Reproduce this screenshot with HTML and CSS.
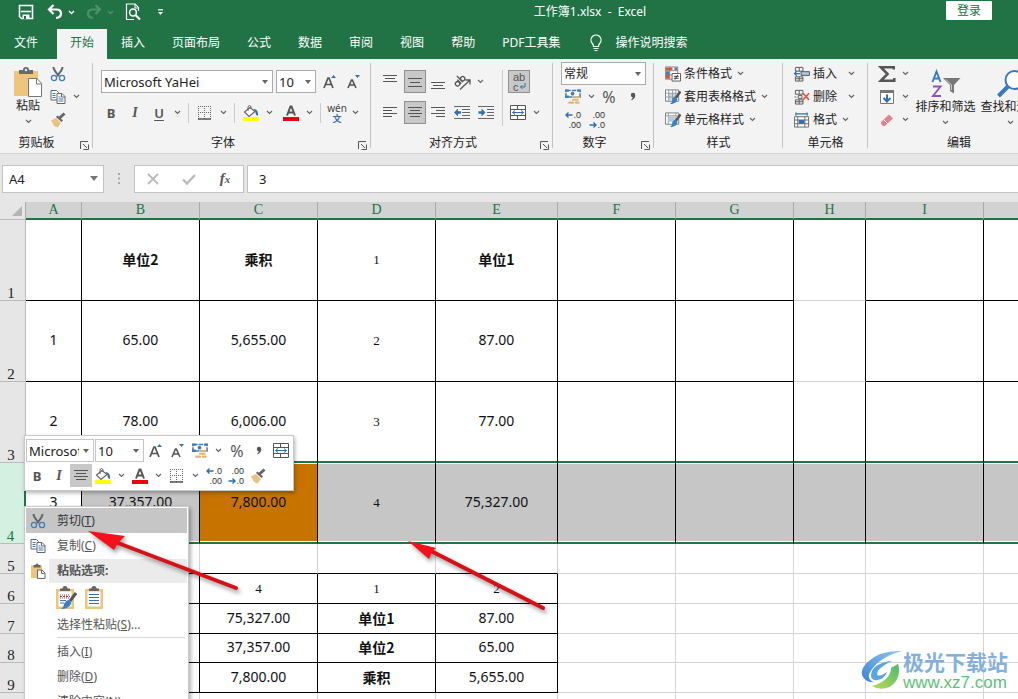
FILE: index.html
```html
<!DOCTYPE html>
<html lang="zh-CN">
<head>
<meta charset="utf-8">
<title>工作簿1.xlsx - Excel</title>
<link rel="stylesheet" href="styles.css">
</head>
<body>
<svg class="sprite" aria-hidden="true">
  <symbol id="chev" viewBox="0 0 7 5"><path d="M1 1l2.500 2.500L6 1" fill="none" stroke="#666" stroke-width="1.2"/></symbol>
  <symbol id="launch" viewBox="0 0 9 9"><path d="M.5 8V.5H8M3 3l4 4M8.500 3.500v5h-5" fill="none" stroke="#555"/></symbol>
  <symbol id="cut" viewBox="0 0 16 16"><path d="M3.500 1c0 3 2 5 5.500 9M12.500 1c0 3-2 5-5.500 9" fill="none" stroke="#666" stroke-width="2"/><circle cx="4" cy="12" r="2.600" fill="none" stroke="#3f7dbd" stroke-width="1.300"/><circle cx="12" cy="12" r="2.600" fill="none" stroke="#3f7dbd" stroke-width="1.300"/></symbol>
  <symbol id="copy" viewBox="0 0 16 16"><path d="M1 1.500h5.500l2 2V11H1z" fill="#fff" stroke="#666"/><path d="M2.500 4.500h3M2.500 6.500h3M2.500 8.500h3" stroke="#3f7dbd"/><path d="M7 4.500h5l3 3V14.500H7z" fill="#fff" stroke="#666"/><path d="M11.500 4.500V8H15" fill="none" stroke="#666"/><path d="M8.500 8h2M8.500 10h5M8.500 12h5" stroke="#3f7dbd"/></symbol>
  <symbol id="brush" viewBox="0 0 16 16"><path d="M1 8.500l5-2.500 5 5-3.500 4.500L4 14z" fill="#eac282"/><path d="M6 5l1.500-1.500 5.500 5L11.500 10z" fill="#666"/><path d="M9.500 6L14.500 1.500" stroke="#666" stroke-width="3"/></symbol>
  <symbol id="paste" viewBox="0 0 28 31"><path d="M0 4h24v25H0z" fill="#eec57c"/><path d="M5 3h4a3 3 0 0 1 6 0h4v4H5z" fill="#6a6a6a"/><circle cx="12" cy="3" r="1.200" fill="#eee"/><path d="M14.500 11.500h8.500l4.500 5V29.500h-13z" fill="#fff" stroke="#777"/><path d="M22.500 11.500v5.500h5" fill="none" stroke="#777"/></symbol>
  <symbol id="paste-s" viewBox="0 0 16 16"><path d="M1 2.500h11V15H1z" fill="#eec57c"/><path d="M3.500 2h2a1.500 1.500 0 0 1 3 0h2v2.500h-7z" fill="#666"/><path d="M7.500 7h4.500l3 3v5.500H7.500z" fill="#fff" stroke="#666"/><path d="M11.500 7v3.500h3" fill="none" stroke="#666"/></symbol>
  <symbol id="grow" viewBox="0 0 14 16"><path d="M1 14L5 4h1l4 10M2.500 10.500h6" fill="none" stroke="#555" stroke-width="1.700"/><path d="M8 4l2.500-3L13 4z" fill="#3f6da5"/></symbol>
  <symbol id="shrink" viewBox="0 0 14 16"><path d="M1 14L4.500 6h.800L9 14M2.500 11h5" fill="none" stroke="#555" stroke-width="1.600"/><path d="M8 1h5l-2.500 3z" fill="#3f6da5"/></symbol>
  <symbol id="border" viewBox="0 0 14 14"><path d="M.5 0v13M6.500 0v13M12.500 0v13M0 .5h13M0 6.500h13" stroke="#666" stroke-dasharray="1 1"/><path d="M0 13h13" stroke="#444" stroke-width="1.400"/></symbol>
  <symbol id="bucket" viewBox="0 0 18 16"><path d="M8 2.500L2.500 7l4.500 4.500L13 6.500z" fill="#fff" stroke="#666" stroke-width="1.200"/><path d="M6 6V1.500q1.500-2 3 0V4" fill="none" stroke="#666"/><path d="M11.500 4q5 0 4.500 7-3-1-2.500-4z" fill="#3f6da5"/><path d="M1 12h16v4H1z" fill="#ff0"/></symbol>
  <symbol id="fcolor" viewBox="0 0 16 16"><path d="M4 10.500L7.500 1.500h1L12 10.500M5.500 7.500h5" fill="none" stroke="#555" stroke-width="2"/><path d="M0 12h16v4H0z" fill="#e60012"/></symbol>
  <symbol id="a-top" viewBox="0 0 16 16"><path d="M1 1.500h14M3 4.500h10M1 7.500h14" stroke="#555"/></symbol>
  <symbol id="a-mid" viewBox="0 0 16 16"><path d="M1 4.500h14M3 8.500h10M1 12.500h14" stroke="#555"/></symbol>
  <symbol id="a-bot" viewBox="0 0 16 16"><path d="M1 8.500h14M3 11.500h10M1 14.500h14" stroke="#555"/></symbol>
  <symbol id="a-left" viewBox="0 0 16 16"><path d="M1 2.500h14M1 5.500h9M1 8.500h14M1 11.500h9" stroke="#555"/></symbol>
  <symbol id="a-cen" viewBox="0 0 16 16"><path d="M1 2.500h14M3 5.500h10M1 8.500h14M3 11.500h10" stroke="#555"/></symbol>
  <symbol id="a-right" viewBox="0 0 16 16"><path d="M1 2.500h14M6 5.500h9M1 8.500h14M6 11.500h9" stroke="#555"/></symbol>
  <symbol id="outdent" viewBox="0 0 18 16"><path d="M1 1.500h16M9 4.500h8M9 7.500h8M9 10.500h8M1 13.500h16" stroke="#666"/><path d="M1 7.500l4-4v2.800h3v2.400H5v2.800z" fill="#2f6fb3"/></symbol>
  <symbol id="indent" viewBox="0 0 18 16"><path d="M1 1.500h16M10 4.500h7M10 7.500h7M10 10.500h7M1 13.500h16" stroke="#666"/><path d="M8.500 7.500l-4-4v2.800h-3v2.400h3v2.800z" fill="#2f6fb3"/></symbol>
  <symbol id="orient" viewBox="0 0 18 18"><g fill="none" stroke="#555" stroke-width="1.300"><g transform="rotate(-45 6 8)"><circle cx="3" cy="9" r="2.200"/><path d="M5.700 6v5.500M8 3v8.500"/><circle cx="10.200" cy="9" r="2.200"/></g><path d="M7 16.500L16.500 7.500M12.500 7h4.500v4.500"/></g></symbol>
  <symbol id="merge" viewBox="0 0 16 16"><path d="M.5.500h15v14H.5zM.5 4.500h15M.5 10.500h15M7.500.5v4M7.500 10.500v4" fill="#fff" stroke="#555"/><path d="M2.500 7.500h11M5 5.500l-2.500 2 2.500 2M11 5.500l2.500 2-2.500 2" fill="none" stroke="#2f6fb3"/></symbol>
  <symbol id="money" viewBox="0 0 17 16"><path d="M1 1h15v7H1z" fill="#fff" stroke="#3f7dbd" stroke-width="1.600" stroke-dasharray="5 1"/><path d="M0 0h4v2.500H0zM13 0h4v2.500h-4zM0 6.500h4V9H0z" fill="#3f7dbd"/><circle cx="8" cy="4.500" r="2" fill="#3f7dbd"/><path d="M9.500 8h5M8.500 11h5M4.500 14h4M11.500 14h3" stroke="#e3b470" stroke-width="2.200" stroke-linecap="round"/></symbol>
  <symbol id="comma" viewBox="0 0 8 16"><circle cx="4" cy="6" r="2.200" fill="#555"/><path d="M6 6q.3 3.500-3.500 5 2-2 1.500-4z" fill="#555" stroke="#555" stroke-width=".6"/></symbol>
  <symbol id="cond" viewBox="0 0 17 16"><path d="M.5.500h13v13H.5zM.5 4.500h13M.5 9h13M5 .5v13" fill="#fff" stroke="#888"/><path d="M1 1h7v3H1zM1 9h4v4H1z" fill="#d5573b"/><path d="M1 5h4v4H1zM10 1h3v3h-3z" fill="#4d7eb3"/><path d="M7.500 7.500h9v8h-9z" fill="#fff" stroke="#555"/><path d="M9.500 10.500h5M9.500 12.500h5M13.500 9l-3 5" stroke="#333"/></symbol>
  <symbol id="tstyle" viewBox="0 0 17 16"><path d="M.5.500h14v12H.5z" fill="#fff" stroke="#777"/><path d="M3 4h9v8H3z" fill="#c9d7e6"/><path d="M.5 4h14M.5 8h14M4 .5v12M8 .5v12M11.500.5v12" fill="none" stroke="#999"/><path d="M16.500 2L11 9.500" stroke="#555" stroke-width="2.600"/><path d="M10.500 8q4 1 2 4.500-2 3-7.500 3 3-1.500 2.500-4 .5-3 3-3.500z" fill="#3b80c4"/></symbol>
  <symbol id="cstyle" viewBox="0 0 17 16"><path d="M.5.500h14v12H.5z" fill="#fff" stroke="#777"/><path d="M.5 3.500h14M3.500.5v12M11.500.5v12" stroke="#999"/><path d="M4 4h7.500v6H4z" fill="#b4cae1"/><path d="M16.500 2L11 9.500" stroke="#555" stroke-width="2.600"/><path d="M10.500 8q4 1 2 4.500-2 3-7.500 3 3-1.500 2.500-4 .5-3 3-3.500z" fill="#3b80c4"/></symbol>
  <symbol id="ins" viewBox="0 0 17 16"><path d="M1.500 1h8v4h-8zM5.500 1v4M1.500 11h8v4.500h-8zM5.500 11v4.500M1.500 13h8" fill="none" stroke="#555"/><path d="M7.500 5.500h9v4h-9z" fill="#a9c5e2" stroke="#555"/><path d="M6.500 7.500h-6M3 5L.5 7.500 3 10" fill="none" stroke="#2f6fb3" stroke-width="1.300"/></symbol>
  <symbol id="del" viewBox="0 0 17 16"><path d="M1.500 1h8v4h-8zM5.500 1v4M1.500 11h8v4.500h-8zM5.500 11v4.500M1.500 13h8M.5 8h2M4.500 6.500h4v3h-4z" fill="none" stroke="#555"/><path d="M9.500 4l6.500 7M16 4l-6.500 7" stroke="#e0593a" stroke-width="1.800"/></symbol>
  <symbol id="fmt" viewBox="0 0 17 16"><path d="M.5 4.500h15v11H.5zM.5 8h15M.5 12h15M4 4.500v11M11.500 4.500v11" fill="#fff" stroke="#666"/><path d="M5 8h6v4H5z" fill="#2f6fb3"/><path d="M2 1.500h12M2 0v3.500M14 0v3.500" stroke="#2f6fb3" stroke-width="1.200"/></symbol>
  <symbol id="sigma" viewBox="0 0 16 16"><path d="M14 4V2H2.500L8.500 8l-6 6H14.500v-2.500" fill="none" stroke="#555" stroke-width="2.200"/></symbol>
  <symbol id="fill" viewBox="0 0 16 16"><path d="M1.500 1.500h13v13h-13z" fill="#fff" stroke="#777"/><path d="M1 1h14v3H1z" fill="#777"/><path d="M8 5.500v7M4.500 9L8 12.500 11.500 9" fill="none" stroke="#2f6fb3" stroke-width="2"/></symbol>
  <symbol id="erase" viewBox="0 0 16 16"><path d="M2 10L10 2.500 14 6.500 6 14H4L2 12z" fill="#e8808f"/><path d="M4.500 7.500L9 12" stroke="#fff"/></symbol>
  <symbol id="sort" viewBox="0 0 30 30"><path d="M1.500 13L5.500 2.500 9.500 13M3 9.500h5" fill="none" stroke="#3b78bd" stroke-width="1.900"/><path d="M2 17.500h7.500L2 27h8" fill="none" stroke="#8c54b8" stroke-width="1.900"/><path d="M12 9h17.500l-6.500 7v8.500l-4-2.500v-6z" fill="#777"/><path d="M15 10.500l5.500 5.500v5" fill="none" stroke="#ccc"/></symbol>
  <symbol id="find" viewBox="0 0 30 30"><circle cx="18.500" cy="11" r="9" fill="#fff" stroke="#3b78bd" stroke-width="2"/><path d="M12 17.500L2.500 27" stroke="#3b78bd" stroke-width="4"/></symbol>
  <symbol id="save" viewBox="0 0 16 16"><path d="M1.500 1.500h13v13h-11l-2-2z" fill="none" stroke="#fff" stroke-width="1.600"/><path d="M3 7.500h10" stroke="#fff" stroke-width="1.600"/><path d="M4.500 10.500h7V15h-7z" fill="#fff"/><path d="M6 12h2v3H6z" fill="#217346"/></symbol>
  <symbol id="undo" viewBox="0 0 16 16"><path d="M2 5.500h7.500q4.500 0 4.500 4t-5 4.500M6.500 1L2 5.500 6.500 10" fill="none" stroke="currentColor" stroke-width="2.200"/></symbol>
  <symbol id="preview" viewBox="0 0 16 18"><path d="M13.500 8V4.500l-3.500-3.500H1.500v15.500H9" fill="none" stroke="#fff" stroke-width="1.200"/><path d="M10 1v4h4" fill="none" stroke="#fff"/><circle cx="8" cy="9.500" r="3.400" fill="none" stroke="#fff" stroke-width="1.500"/><path d="M10.500 12l4.500 4.500" stroke="#fff" stroke-width="2.200"/></symbol>
  <symbol id="bulb" viewBox="0 0 14 18"><path d="M4.500 12.500q0-2-1.500-3.500a5 5 0 1 1 8 0q-1.500 1.500-1.500 3.500zM4.500 14.500h5M5.500 16.500h3" fill="none" stroke="#fff" stroke-width="1.200"/></symbol>
  <symbol id="clip-fmt" viewBox="0 0 22 24"><path d="M1 3h18v20H1z" fill="#eec57c"/><path d="M3.500 5.500h13v15h-13z" fill="#fff"/><path d="M5 4V2.500h2.500a2.500 2.500 0 0 1 5 0H15V5H5z" fill="#666"/><path d="M5 9h10M5 12h10" stroke="#c25" stroke-dasharray="1 1"/><path d="M5 10.500h10" stroke="#555" stroke-dasharray="2 1"/><path d="M5 14.500h6M5 17h4" stroke="#3b78bd"/><path d="M21 7l-6 8" stroke="#555" stroke-width="3"/><path d="M14 14q4 2 1 5.500-3 3.500-9 3.500 3-2 3-5 2-4 5-4z" fill="#3b80c4"/></symbol>
  <symbol id="clip-val" viewBox="0 0 22 24"><path d="M1 3h18v20H1z" fill="#eec57c"/><path d="M3.500 5.500h13v15h-13z" fill="#fff"/><path d="M5 4V2.500h2.500a2.500 2.500 0 0 1 5 0H15V5H5z" fill="#666"/><path d="M5 8.500h10M5 11.500h10M5 14.500h10M5 17.500h10" stroke="#3b6ea8" stroke-width="1.200"/></symbol>
  <symbol id="l-arrow" viewBox="0 0 8 8"><path d="M7.500 4H1M3.500 1.500L1 4l2.500 2.500" fill="none" stroke="#2f6fb3" stroke-width="1.400"/></symbol>
  <symbol id="r-arrow" viewBox="0 0 8 8"><path d="M.5 4H7M4.500 1.500L7 4 4.500 6.500" fill="none" stroke="#2f6fb3" stroke-width="1.400"/></symbol>
</svg>

<div class="app">
  <header class="titlebar">
    <div class="quick">
      <button class="qbtn" aria-label="保存"><svg class="i16"><use href="#save"/></svg></button>
      <button class="qbtn" aria-label="撤消"><svg class="i16"><use href="#undo"/></svg></button>
      <svg class="qchev" viewBox="0 0 7 5"><path d="M1 1l2.500 2.500L6 1" fill="none" stroke="#fff" stroke-width="1.300"/></svg>
      <button class="qbtn redo" aria-label="恢复"><svg class="i16 flip"><use href="#undo"/></svg></button>
      <svg class="qchev" viewBox="0 0 7 5"><path d="M1 1l2.500 2.500L6 1" fill="none" stroke="#4d9069" stroke-width="1.300"/></svg>
      <button class="qbtn" aria-label="打印预览"><svg class="i18"><use href="#preview"/></svg></button>
      <button class="qbtn more" aria-label="自定义"><svg class="qmore" viewBox="0 0 7 7"><path d="M1 .8h5" stroke="#fff" stroke-width="1.200"/><path d="M1 3h5L3.500 6z" fill="#fff"/></svg></button>
    </div>
    <h1 class="doc">工作簿1.xlsx&nbsp; -&nbsp; Excel</h1>
    <button class="login">登录</button>
  </header>

  <nav class="tabs">
    <button class="tab file">文件</button>
    <button class="tab on">开始</button>
    <button class="tab">插入</button>
    <button class="tab">页面布局</button>
    <button class="tab">公式</button>
    <button class="tab">数据</button>
    <button class="tab">审阅</button>
    <button class="tab">视图</button>
    <button class="tab">帮助</button>
    <button class="tab">PDF工具集</button>
    <button class="tab tell"><svg class="i18"><use href="#bulb"/></svg>操作说明搜索</button>
  </nav>

  <section class="ribbon">
    <div class="group g-clip">
      <div class="body">
        <button class="big"><svg class="i-paste"><use href="#paste"/></svg>粘贴<svg class="ch"><use href="#chev"/></svg></button>
        <div class="rows3">
          <div class="row"><button class="tb" aria-label="剪切"><svg class="i16"><use href="#cut"/></svg></button></div>
          <div class="row"><button class="tb" aria-label="复制"><svg class="i16"><use href="#copy"/></svg></button><button class="cb" aria-label="复制选项"><svg class="ch"><use href="#chev"/></svg></button></div>
          <div class="row"><button class="tb" aria-label="格式刷"><svg class="i16"><use href="#brush"/></svg></button></div>
        </div>
      </div>
      <div class="cap"><span>剪贴板</span><svg class="launch"><use href="#launch"/></svg></div>
    </div>

    <div class="group g-font">
      <div class="body rows2">
        <div class="row fonts">
          <span class="pick w-name"><select aria-label="字体"><option>Microsoft YaHei</option></select></span>
          <span class="pick w-size"><select aria-label="字号"><option>10</option></select></span>
          <button class="tb" aria-label="增大字号"><svg class="i-a"><use href="#grow"/></svg></button>
          <button class="tb" aria-label="减小字号"><svg class="i-a"><use href="#shrink"/></svg></button>
        </div>
        <div class="row">
          <button class="tb b">B</button><button class="tb it">I</button><button class="tb u">U</button><button class="cb" aria-label="下划线"><svg class="ch"><use href="#chev"/></svg></button>
          <i class="vs"></i>
          <button class="tb" aria-label="边框"><svg class="i14"><use href="#border"/></svg></button><button class="cb" aria-label="边框选项"><svg class="ch"><use href="#chev"/></svg></button>
          <i class="vs"></i>
          <button class="tb" aria-label="填充"><svg class="i-wide"><use href="#bucket"/></svg></button><button class="cb" aria-label="填充选项"><svg class="ch"><use href="#chev"/></svg></button>
          <button class="tb fc" aria-label="字色"><svg class="i16"><use href="#fcolor"/></svg></button><button class="cb" aria-label="字色选项"><svg class="ch"><use href="#chev"/></svg></button>
          <i class="vs"></i>
          <button class="tb wen"><span>wén</span><span class="zi">文</span></button><button class="cb" aria-label="拼音选项"><svg class="ch"><use href="#chev"/></svg></button>
        </div>
      </div>
      <div class="cap"><span>字体</span><svg class="launch"><use href="#launch"/></svg></div>
    </div>

    <div class="group g-align">
      <div class="body">
        <div class="rows2">
          <div class="row">
            <button class="tb" aria-label="顶端对齐"><svg class="i16"><use href="#a-top"/></svg></button>
            <button class="tb act" aria-label="垂直居中"><svg class="i16"><use href="#a-mid"/></svg></button>
            <button class="tb" aria-label="底端对齐"><svg class="i16"><use href="#a-bot"/></svg></button>
            <button class="tb" aria-label="方向"><svg class="i18"><use href="#orient"/></svg></button>
            <button class="cb" aria-label="方向选项"><svg class="ch"><use href="#chev"/></svg></button>
          </div>
          <div class="row">
            <button class="tb" aria-label="左对齐"><svg class="i16"><use href="#a-left"/></svg></button>
            <button class="tb act" aria-label="居中"><svg class="i16"><use href="#a-cen"/></svg></button>
            <button class="tb" aria-label="右对齐"><svg class="i16"><use href="#a-right"/></svg></button>
            <button class="tb" aria-label="减少缩进"><svg class="i-wide"><use href="#outdent"/></svg></button>
            <button class="tb" aria-label="增加缩进"><svg class="i-wide"><use href="#indent"/></svg></button>
          </div>
        </div>
        <i class="vs tall"></i>
        <div class="rows2">
          <div class="row"><button class="tb act wrap"><span>ab</span><span>c<svg class="ret" viewBox="0 0 7 7"><path d="M6 0v4H1.500M3.500 2l-2 2 2 2" fill="none" stroke="#2f6fb3"/></svg></span></button></div>
          <div class="row"><button class="tb" aria-label="合并"><svg class="i16"><use href="#merge"/></svg></button><button class="cb" aria-label="合并选项"><svg class="ch"><use href="#chev"/></svg></button></div>
        </div>
      </div>
      <div class="cap"><span>对齐方式</span><svg class="launch"><use href="#launch"/></svg></div>
    </div>

    <div class="group g-num">
      <div class="body rows3">
        <div class="row"><span class="pick w-fmt"><select aria-label="数字格式"><option>常规</option></select></span></div>
        <div class="row">
          <button class="tb" aria-label="会计格式"><svg class="i16"><use href="#money"/></svg></button><button class="cb" aria-label="货币选项"><svg class="ch"><use href="#chev"/></svg></button>
          <button class="tb pct">%</button><button class="tb" aria-label="千位分隔"><svg class="i-comma"><use href="#comma"/></svg></button>
        </div>
        <div class="row">
          <button class="tb dec"><span><svg><use href="#l-arrow"/></svg>.0</span><span>.00</span></button>
          <button class="tb dec"><span>.00</span><span><svg><use href="#r-arrow"/></svg>.0</span></button>
        </div>
      </div>
      <div class="cap"><span>数字</span><svg class="launch"><use href="#launch"/></svg></div>
    </div>

    <div class="group g-style">
      <div class="body rows3">
        <button class="row lab"><svg class="i16"><use href="#cond"/></svg>条件格式<svg class="ch"><use href="#chev"/></svg></button>
        <button class="row lab"><svg class="i16"><use href="#tstyle"/></svg>套用表格格式<svg class="ch"><use href="#chev"/></svg></button>
        <button class="row lab"><svg class="i16"><use href="#cstyle"/></svg>单元格样式<svg class="ch"><use href="#chev"/></svg></button>
      </div>
      <div class="cap"><span>样式</span></div>
    </div>

    <div class="group g-cell">
      <div class="body rows3">
        <button class="row lab far"><svg class="i16"><use href="#ins"/></svg>插入<svg class="ch"><use href="#chev"/></svg></button>
        <button class="row lab far"><svg class="i16"><use href="#del"/></svg>删除<svg class="ch"><use href="#chev"/></svg></button>
        <button class="row lab"><svg class="i16"><use href="#fmt"/></svg>格式<svg class="ch"><use href="#chev"/></svg></button>
      </div>
      <div class="cap"><span>单元格</span></div>
    </div>

    <div class="group g-edit">
      <div class="body">
        <div class="rows3">
          <div class="row"><button class="tb" aria-label="求和"><svg class="i18"><use href="#sigma"/></svg></button><button class="cb" aria-label="求和选项"><svg class="ch"><use href="#chev"/></svg></button></div>
          <div class="row"><button class="tb" aria-label="填充序列"><svg class="i16"><use href="#fill"/></svg></button><button class="cb" aria-label="填充序列选项"><svg class="ch"><use href="#chev"/></svg></button></div>
          <div class="row"><button class="tb" aria-label="清除"><svg class="i16"><use href="#erase"/></svg></button><button class="cb" aria-label="清除选项"><svg class="ch"><use href="#chev"/></svg></button></div>
        </div>
        <button class="big"><svg class="i30"><use href="#sort"/></svg>排序和筛选<svg class="ch"><use href="#chev"/></svg></button>
        <button class="big"><svg class="i30"><use href="#find"/></svg>查找和选择<svg class="ch"><use href="#chev"/></svg></button>
      </div>
      <div class="cap"><span>编辑</span></div>
    </div>
  </section>

  <section class="fbar">
    <div class="namebox"><input aria-label="名称框" value="A4"><button class="tri" aria-label="名称列表"></button></div>
    <svg class="dots" viewBox="0 0 3 12"><path d="M0 0h2v2H0zM0 4.500h2v2H0zM0 9h2v2H0z" fill="#aaa"/></svg>
    <div class="fxbox">
      <button aria-label="取消"><svg class="i14" viewBox="0 0 14 14"><path d="M2 2l10 10M12 2L2 12" stroke="#bbb" stroke-width="1.800"/></svg></button>
      <button aria-label="输入"><svg class="i14" viewBox="0 0 14 14"><path d="M1 7.500l4 4L13 3" fill="none" stroke="#bbb" stroke-width="2.400"/></svg></button>
      <button class="fx">f<sub>x</sub></button>
    </div>
    <input class="formula" aria-label="编辑栏" value="3">
  </section>

  <main class="sheet">
    <table class="grid">
      <colgroup><col class="c-h"><col class="c-a"><col class="c-n"><col class="c-n"><col class="c-n"><col class="c-e"><col class="c-n"><col class="c-n"><col class="c-s"><col class="c-n"><col class="c-n"></colgroup>
      <thead><tr><th class="corner"><svg viewBox="0 0 10 10"><path d="M10 0v10H0z" fill="#b4b4b4"/></svg></th><th>A</th><th>B</th><th>C</th><th>D</th><th>E</th><th>F</th><th>G</th><th>H</th><th>I</th><th></th></tr></thead>
      <tbody>
        <tr class="tall full"><th>1</th><td></td><td class="h">单位2</td><td class="h">乘积</td><td class="s">1</td><td class="h">单位1</td><td></td><td></td><td class="open"></td><td></td><td></td></tr>
        <tr class="tall full"><th>2</th><td>1</td><td>65.00</td><td>5,655.00</td><td class="s">2</td><td>87.00</td><td></td><td></td><td class="open"></td><td></td><td></td></tr>
        <tr class="tall full above"><th>3</th><td>2</td><td>78.00</td><td>6,006.00</td><td class="s">3</td><td>77.00</td><td></td><td></td><td></td><td></td><td></td></tr>
        <tr class="tall full sel"><th>4</th><td class="cur">3</td><td>37,357.00</td><td class="hot">7,800.00</td><td class="s">4</td><td>75,327.00</td><td></td><td></td><td></td><td></td><td></td></tr>
        <tr class="low gap"><th>5</th><td></td><td></td><td></td><td></td><td></td><td></td><td></td><td></td><td></td><td></td></tr>
        <tr class="low part"><th>6</th><td></td><td></td><td class="s">4</td><td class="s">1</td><td class="s">2</td><td></td><td></td><td></td><td></td><td></td></tr>
        <tr class="low part"><th>7</th><td></td><td></td><td>75,327.00</td><td class="h">单位1</td><td>87.00</td><td></td><td></td><td></td><td></td><td></td></tr>
        <tr class="low part short"><th>8</th><td></td><td></td><td>37,357.00</td><td class="h">单位2</td><td>65.00</td><td></td><td></td><td></td><td></td><td></td></tr>
        <tr class="low part"><th>9</th><td></td><td></td><td>7,800.00</td><td class="h">乘积</td><td>5,655.00</td><td></td><td></td><td></td><td></td><td></td></tr>
        <tr class="low"><th></th><td></td><td></td><td></td><td></td><td></td><td></td><td></td><td></td><td></td><td></td></tr>
      </tbody>
    </table>

    <div class="mini">
      <div class="row">
        <span class="pick m-name"><select aria-label="浮动字体"><option>Microsoft YaHei</option></select></span>
        <span class="pick m-size"><select aria-label="浮动字号"><option>10</option></select></span>
        <button class="tb" aria-label="增大"><svg class="i-a"><use href="#grow"/></svg></button>
        <button class="tb" aria-label="减小"><svg class="i-a"><use href="#shrink"/></svg></button>
        <button class="tb" aria-label="货币"><svg class="i16"><use href="#money"/></svg></button><button class="cb" aria-label="货币菜单"><svg class="ch"><use href="#chev"/></svg></button>
        <button class="tb pct">%</button>
        <button class="tb" aria-label="千位"><svg class="i-comma"><use href="#comma"/></svg></button>
        <button class="tb" aria-label="合并居中"><svg class="i16"><use href="#merge"/></svg></button>
      </div>
      <div class="row">
        <button class="tb b">B</button><button class="tb it">I</button>
        <button class="tb act" aria-label="居中对齐"><svg class="i16"><use href="#a-cen"/></svg></button>
        <button class="tb" aria-label="底色"><svg class="i-wide"><use href="#bucket"/></svg></button><button class="cb" aria-label="底色菜单"><svg class="ch"><use href="#chev"/></svg></button>
        <button class="tb" aria-label="文字颜色"><svg class="i16"><use href="#fcolor"/></svg></button><button class="cb" aria-label="颜色菜单"><svg class="ch"><use href="#chev"/></svg></button>
        <button class="tb" aria-label="框线"><svg class="i14"><use href="#border"/></svg></button><button class="cb" aria-label="框线菜单"><svg class="ch"><use href="#chev"/></svg></button>
        <button class="tb dec"><span><svg><use href="#l-arrow"/></svg>.0</span><span>.00</span></button>
        <button class="tb dec"><span>.00</span><span><svg><use href="#r-arrow"/></svg>.0</span></button>
        <button class="tb" aria-label="刷子"><svg class="i16"><use href="#brush"/></svg></button>
      </div>
    </div>

    <div class="menu">
      <button class="mi hover"><svg class="i16"><use href="#cut"/></svg><span>剪切(<u>T</u>)</span></button>
      <button class="mi"><svg class="i16"><use href="#copy"/></svg><span>复制(<u>C</u>)</span></button>
      <div class="mi head"><svg class="i16"><use href="#paste-s"/></svg><strong>粘贴选项:</strong></div>
      <div class="opts"><button aria-label="粘贴"><svg class="i-clip"><use href="#clip-fmt"/></svg></button><button aria-label="值"><svg class="i-clip"><use href="#clip-val"/></svg></button></div>
      <button class="mi noicon"><span>选择性粘贴(<u>S</u>)...</span></button>
      <hr>
      <button class="mi noicon"><span>插入(<u>I</u>)</span></button>
      <button class="mi noicon"><span>删除(<u>D</u>)</span></button>
      <button class="mi noicon"><span>清除内容(<u>N</u>)</span></button>
    </div>

    <svg class="arrows" width="600" height="430" viewBox="0 0 600 430">
      <g stroke="#d8101a" stroke-width="4" stroke-linecap="round"><path d="M118 341L236 386"/><path d="M433 350L543 406"/></g>
      <g fill="#f5101a"><path d="M88 329L125 334L118 341L114 348z"/><path d="M408 339L436 346L432 350L429 357z"/></g>
    </svg>

    <div class="mark">
      <svg viewBox="0 0 44 42"><defs><linearGradient id="wb" x1="0" y1="1" x2="1" y2="0"><stop offset="0" stop-color="#3f83d6"/><stop offset="1" stop-color="#8fc8ee"/></linearGradient><linearGradient id="wg" x1="0" y1="1" x2="1" y2="0"><stop offset="0" stop-color="#b9dc52"/><stop offset="1" stop-color="#4cba74"/></linearGradient></defs><path d="M43 1Q21 0 8 12-2 22 4 29q3 4 10 4-9-4-2-13Q21 7 43 1z" fill="url(#wb)"/><path d="M33 11q-17 2-21 11-3 9 5 9 8-1 11-9-6 5-10 4-3-6 15-15z" fill="#5aa7df"/><path d="M39 14q-4 3-7 4-1 14-20 19 9 5 18 1 13-8 9-24z" fill="url(#wg)"/></svg>
      <div><p class="cn">极光下载站</p><p class="url">www.xz7.com</p></div>
    </div>
  </main>
</div>
</body>
</html>
```
FILE: styles.css
```css
* { box-sizing: border-box; }
body { margin: 0; font-family: "Noto Sans", "Noto Sans CJK SC", sans-serif; font-size: 12px; line-height: 16px; color: #222; background: #fff; }
button, input, select { font: inherit; color: inherit; margin: 0; padding: 0; border: 0; border-radius: 0; background: none; outline: 0; }
button { display: flex; align-items: center; justify-content: center; flex: none; white-space: nowrap; }
h1, p { margin: 0; }
svg { display: block; flex: none; }
.sprite { position: absolute; width: 0; height: 0; }
.app { display: flex; flex-direction: column; height: 100vh; overflow: hidden; }

.i14 { width: 14px; height: 14px; }
.i16 { width: 16px; height: 16px; }
.i18 { width: 18px; height: 18px; }
.i30 { width: 30px; height: 30px; }
.i-a { width: 14px; height: 16px; }
.i-wide { width: 18px; height: 16px; }
.i-comma { width: 8px; height: 16px; }
.i-paste { width: 28px; height: 31px; }
.i-clip { width: 22px; height: 24px; }
.ch { width: 7px; height: 5px; }
.flip { transform: scaleX(-1); }

.titlebar { display: grid; grid-template-columns: 1fr auto 1fr; align-items: start; height: 29px; flex: none; background: #217346; color: #fff; padding-right: 26px; }
.quick { display: flex; align-items: center; height: 24px; padding-left: 17px; }
.qbtn { width: 18px; height: 24px; }
.qbtn + .qbtn { margin-left: 11px; }
.qchev { width: 7px; height: 5px; margin: 0 10px 0 4px; }
.redo { color: #4d9069; }
.qbtn + .more { margin-left: 9px; }
.qmore { width: 7px; height: 7px; }
.doc { font-size: 12px; font-weight: 400; line-height: 24px; padding-left: 188px; white-space: nowrap; }
.login { justify-self: end; margin-top: 1px; width: 46px; height: 19px; background: #fff; color: #217346; border-radius: 1px; }

.tabs { display: flex; gap: 1px; height: 30px; flex: none; background: #217346; color: #fff; }
.tab { padding: 0 13px 2px; height: 30px; }
.tab.file { padding-left: 14px; padding-right: 18px; }
.tab.on { background: #f3f3f3; color: #217346; }
.tell { gap: 10px; }

.ribbon { display: flex; height: 95px; flex: none; background: #f3f3f3; border-bottom: 1px solid #d2d2d2; overflow: hidden; }
.group { display: flex; flex-direction: column; flex: none; padding-top: 3px; position: relative; }
.group::after { content: ""; position: absolute; right: 0; top: 4px; bottom: 5px; width: 1px; background: #c3c3c3; }
.body { display: flex; height: 69px; flex: none; }
.rows3 { display: flex; flex-direction: column; }
.rows3 .row { height: 23px; }
.rows2 { display: flex; flex-direction: column; padding-top: 4px; }
.rows2 .row { height: 31px; }
.row { display: flex; align-items: center; justify-content: flex-start; }
.cap { position: relative; text-align: center; line-height: 23px; height: 22px; }
.launch { position: absolute; right: 4px; bottom: 3px; width: 9px; height: 9px; }
.tb { width: 24px; height: 24px; color: #555; }
.cb { width: 12px; height: 24px; }
.act { width: 22px; height: 23px; margin: 0 0 0 2px; background: #c8c8c8; border: 1px solid #8f8f8f; }
.vs { flex: none; width: 10px; height: 20px; background: linear-gradient(#ccc, #ccc) center / 1px 100% no-repeat; }
.vs.tall { width: 8px; height: 56px; margin-top: 8px; }
.fc { margin-left: 4px; }
.b { font-weight: 700; font-size: 13px; }
.it { font: italic 700 14px "Liberation Serif", serif; }
.u { font-weight: 600; font-size: 13px; text-decoration: underline; text-underline-offset: 2px; }
.pct { font-size: 16px; }
.wen { flex-direction: column; font-size: 10px; line-height: 12px; color: #444; }
.wen .zi { font-size: 9px; line-height: 10px; font-weight: 700; color: #3b6ea8; }
.wrap { flex-direction: column; align-items: flex-start; padding-left: 4px; font: 11px/10px "Liberation Sans", sans-serif; }
.wrap span { display: flex; align-items: center; }
.ret { width: 7px; height: 7px; }
.dec { flex-direction: column; align-items: stretch; font: 9px/10px "Liberation Sans", sans-serif; color: #333; padding: 0 4px; }
.dec span { display: flex; align-items: center; justify-content: flex-end; }
.dec svg { width: 8px; height: 8px; }
.big { flex-direction: column; justify-content: flex-start; }
.big .ch { margin-top: 5px; }

.pick { position: relative; display: block; flex: none; height: 23px; background: #fff; border: 1px solid #ababab; }
.pick select { appearance: none; display: block; width: 100%; height: 100%; padding: 0 14px 0 2px; font-size: 13px; }
.pick::after { content: ""; position: absolute; right: 4px; top: 9px; border: 3px solid transparent; border-top: 4px solid #666; border-bottom: 0; pointer-events: none; }
.w-name { width: 172px; }
.w-size { width: 40px; margin: 0 2px 0 3px; }
.w-fmt { width: 85px; }
.w-fmt select { font-size: 12px; }

.g-clip { width: 93px; }
.g-clip .body { padding-left: 14px; }
.g-clip .big { padding-top: 5px; }
.g-clip .rows3 { padding-left: 4px; }
.g-clip .cap { padding-right: 20px; }
.g-font { width: 278px; }
.g-font .body { padding-left: 6px; }
.fonts { padding-left: 2px; }
.g-font .cap { padding-right: 18px; }
.g-align { width: 182px; }
.g-align .body { padding-left: 7px; }
.g-align .cap { padding-right: 18px; }
.g-num { width: 101px; }
.g-num .body { padding-left: 8px; }
.g-num .cap { padding-right: 18px; }
.g-style { width: 129px; }
.g-style .body, .g-cell .body { padding-left: 11px; }
.lab { gap: 3px; }
.lab .ch { margin-left: 2px; }
.far .ch { margin-left: 8px; }
.g-cell { width: 85px; }
.g-edit { width: 182px; }
.g-edit .body { padding-left: 7px; }
.g-edit .big { width: 65px; padding-top: 7px; }
.g-edit .big:nth-child(2) { margin-left: 2px; }

.fbar { display: flex; align-items: center; flex: none; height: 48px; padding: 1px 0 0 2px; background: #e6e6e6; }
.namebox { display: flex; width: 102px; height: 28px; background: #fff; border: 1px solid #c3c3c3; }
.namebox input { flex: 1; min-width: 0; padding-left: 6px; font-size: 13px; }
.tri { width: 18px; }
.tri::before { content: ""; border: 4px solid transparent; border-top: 5px solid #777; border-bottom: 0; }
.dots { width: 3px; height: 12px; margin: 0 13px 0 14px; }
.fxbox { display: flex; width: 110px; height: 28px; background: #fff; border: 1px solid #c3c3c3; }
.fxbox button { flex: 1; }
.fx { font: italic 700 15px "Liberation Serif", serif; color: #555; }
.fx sub { font-size: 11px; }
.formula { flex: 1; min-width: 0; height: 28px; margin-left: 3px; padding-left: 11px; background: #fff; border: 1px solid #c3c3c3; border-right: 0; font-size: 13px; }

.sheet { position: relative; flex: 1; min-height: 0; overflow: hidden; background: #fff; }
.grid { table-layout: fixed; width: 1084px; border-collapse: separate; border-spacing: 0; }
.c-h { width: 26px; }
.c-a { width: 56px; }
.c-n { width: 118px; }
.c-e { width: 122px; }
.c-s { width: 72px; }
.grid th, .grid td { padding: 0; border: 0 solid #d4d4d4; border-width: 0 1px 1px 0; text-align: center; vertical-align: middle; overflow: hidden; }
.grid td { font-size: 14px; color: #111; padding-bottom: 2px; }
.grid th { font: 400 15px/14px "Liberation Serif", serif; }
.grid thead th { height: 18px; font-size: 14px; background: #d2d2d2; color: #217346; border-color: #aaa; border-bottom: 2px solid #217346; }
.grid thead .corner { background: #e6e6e6; border-bottom: 1px solid #bbb; }
.corner svg { width: 10px; height: 10px; margin-left: 12px; }
.grid tbody th { background: #e6e6e6; border-color: #bbb; vertical-align: bottom; padding-right: 3px; }
.grid .h { font-weight: 700; font-family: "Noto Sans CJK SC", sans-serif; }
.grid .s { font: 13px "Liberation Serif", serif; padding-bottom: 0; }
.tall > * { height: 81px; }
.low > * { height: 30px; }
.short > * { height: 29px; }
.grid .full td { border-color: #000; }
.grid .full .open { border-bottom-color: #d4d4d4; }
.grid .above td { border-bottom: 2px solid #217346; }
.grid .sel td { background: #c6c6c6; border-bottom: 2px solid #217346; box-shadow: inset 0 1px #fff, inset 0 -1px #fff; }
.grid .sel .cur { background: #fff; }
.grid .sel .hot { background: #c67300; }
.grid .sel th { background: #d3f0e0; color: #217346; border-right: 2px solid #217346; }
.grid .gap td:nth-child(-n+6) { border-bottom-color: #000; }
.grid .part td:nth-child(-n+6) { border-color: #000; }

.mini { position: absolute; left: 24px; top: 233px; padding: 2px 1px; background: #fff; border: 1px solid #c8c8c8; box-shadow: 1px 2px 4px rgba(0, 0, 0, .3); }
.mini .row { height: 25px; }
.mini .tb { width: 22px; }
.mini .cb { width: 15px; }
.mini .act { margin: 0; border-color: #c8c8c8; }
.mini .dec { padding: 0 3px; }
.m-name { width: 68px; margin-right: 1px; }
.m-size { width: 49px; margin-right: 1px; }
.mini .pick { border-color: #c6c6c6; }

.menu { position: absolute; left: 24px; top: 304px; width: 165px; padding: 1px; background: #fff; border: 1px solid #c8c8c8; box-shadow: 2px 2px 4px rgba(0, 0, 0, .3); color: #555; }
.mi { display: flex; align-items: center; justify-content: flex-start; width: 100%; height: 25px; padding-left: 4px; gap: 11px; }
.mi.hover { background: #c6c6c6; color: #333; }
.mi.noicon { padding-left: 31px; }
.mi.head { gap: 3px; }
.head strong { flex: 1; background: #ebebeb; line-height: 24px; padding-left: 8px; }
.opts { display: flex; gap: 7px; height: 29px; align-items: center; padding-left: 29px; }
.menu hr { margin: 0 2px 1px 31px; border: 0; border-top: 1px solid #d8d8d8; }

.arrows { position: absolute; left: 0; top: 0; pointer-events: none; filter: drop-shadow(2px 3px 2px rgba(0, 0, 0, .4)); }
.mark { position: absolute; right: 10px; bottom: 7px; display: flex; align-items: center; }
.mark svg { width: 43px; height: 41px; }
.cn { font: 700 21px/24px "Noto Sans CJK SC", sans-serif; color: #86b0dc; }
.url { font: 400 17px/19px "Liberation Sans", sans-serif; color: #5fbf7a; }
```
